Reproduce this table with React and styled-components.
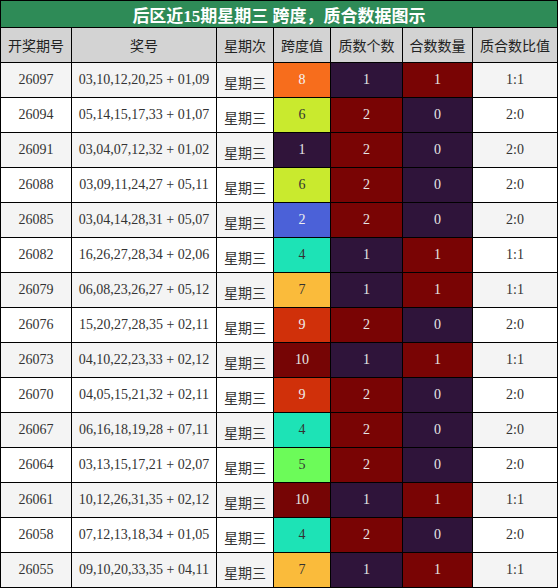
import React from "react";
import styled, { createGlobalStyle } from "styled-components";

const GlobalStyle = createGlobalStyle`
  html, body { margin: 0; padding: 0; background: #ffffff; }
  body { font-family: "Liberation Serif", "Noto Sans CJK SC", serif; }
`;

const Board = styled.div`
  width: 558px;
  display: grid;
  grid-template-columns: 70px 144px 56px 56px 71px 69px 84px;
  grid-template-rows: 26px;
  grid-auto-rows: 34px;
  gap: 1px;
  padding: 1px;
  box-sizing: border-box;
  background: #000000;
`;

const Title = styled.div`
  grid-column: 1 / -1;
  background: #2e8b57;
  color: #ffffff;
  font-size: 17px;
  font-weight: bold;
  display: flex;
  align-items: center;
  justify-content: center;
  font-family: "Liberation Serif", "Noto Sans CJK SC", serif;
`;

const Head = styled.div`
  background: #d3d3d3;
  color: #222222;
  font-size: 14px;
  font-family: "Noto Sans CJK SC", sans-serif;
  display: flex;
  align-items: center;
  justify-content: center;
`;

const Cell = styled.div`
  background: ${(p) => p.$bg || (p.$odd ? "#f4f4f4" : "#ffffff")};
  color: ${(p) => p.$fg || "#333333"};
  font-size: 14px;
  font-family: ${(p) => (p.$cjk ? `"Noto Sans CJK SC", sans-serif` : `"Liberation Serif", serif`)};
  padding-top: ${(p) => (p.$cjk ? "3px" : "0")};
  box-sizing: border-box;
  display: flex;
  align-items: center;
  justify-content: center;
  white-space: nowrap;
`;

const spanColors = {
  1: ["#30143a", "#e6e6e6"],
  2: ["#4b61d8", "#f0f0f0"],
  4: ["#1de3b6", "#333333"],
  5: ["#6cfb59", "#333333"],
  6: ["#c9ea2e", "#333333"],
  7: ["#fabb3b", "#333333"],
  8: ["#f76d1c", "#f5f5f5"],
  9: ["#d0300a", "#f0f0f0"],
  10: ["#760505", "#e6e6e6"],
};

const PURPLE = "#2f143a";
const RED = "#790404";

const rows = [
  ["26097", "03,10,12,20,25 + 01,09", 8, 1, 1, "1:1"],
  ["26094", "05,14,15,17,33 + 01,07", 6, 2, 0, "2:0"],
  ["26091", "03,04,07,12,32 + 01,02", 1, 2, 0, "2:0"],
  ["26088", "03,09,11,24,27 + 05,11", 6, 2, 0, "2:0"],
  ["26085", "03,04,14,28,31 + 05,07", 2, 2, 0, "2:0"],
  ["26082", "16,26,27,28,34 + 02,06", 4, 1, 1, "1:1"],
  ["26079", "06,08,23,26,27 + 05,12", 7, 1, 1, "1:1"],
  ["26076", "15,20,27,28,35 + 02,11", 9, 2, 0, "2:0"],
  ["26073", "04,10,22,23,33 + 02,12", 10, 1, 1, "1:1"],
  ["26070", "04,05,15,21,32 + 02,11", 9, 2, 0, "2:0"],
  ["26067", "06,16,18,19,28 + 07,11", 4, 2, 0, "2:0"],
  ["26064", "03,13,15,17,21 + 02,07", 5, 2, 0, "2:0"],
  ["26061", "10,12,26,31,35 + 02,12", 10, 1, 1, "1:1"],
  ["26058", "07,12,13,18,34 + 01,05", 4, 2, 0, "2:0"],
  ["26055", "09,10,20,33,35 + 04,11", 7, 1, 1, "1:1"],
];

const heads = ["开奖期号", "奖号", "星期次", "跨度值", "质数个数", "合数数量", "质合数比值"];

export default function App() {
  return (
    <>
      <GlobalStyle />
      <Board>
        <Title>后区近15期星期三 跨度，质合数据图示</Title>
        {heads.map((h) => (
          <Head key={h}>{h}</Head>
        ))}
        {rows.map(([issue, nums, span, prime, comp, ratio], i) => {
          const odd = i % 2 === 0;
          const [sbg, sfg] = spanColors[span];
          return (
            <React.Fragment key={issue}>
              <Cell $odd={odd}>{issue}</Cell>
              <Cell $odd={odd}>{nums}</Cell>
              <Cell $odd={odd} $cjk>星期三</Cell>
              <Cell $bg={sbg} $fg={sfg}>{span}</Cell>
              <Cell $bg={prime === 1 ? PURPLE : RED} $fg="#e6e6e6">{prime}</Cell>
              <Cell $bg={comp === 1 ? RED : PURPLE} $fg="#e6e6e6">{comp}</Cell>
              <Cell $odd={odd}>{ratio}</Cell>
            </React.Fragment>
          );
        })}
      </Board>
    </>
  );
}
